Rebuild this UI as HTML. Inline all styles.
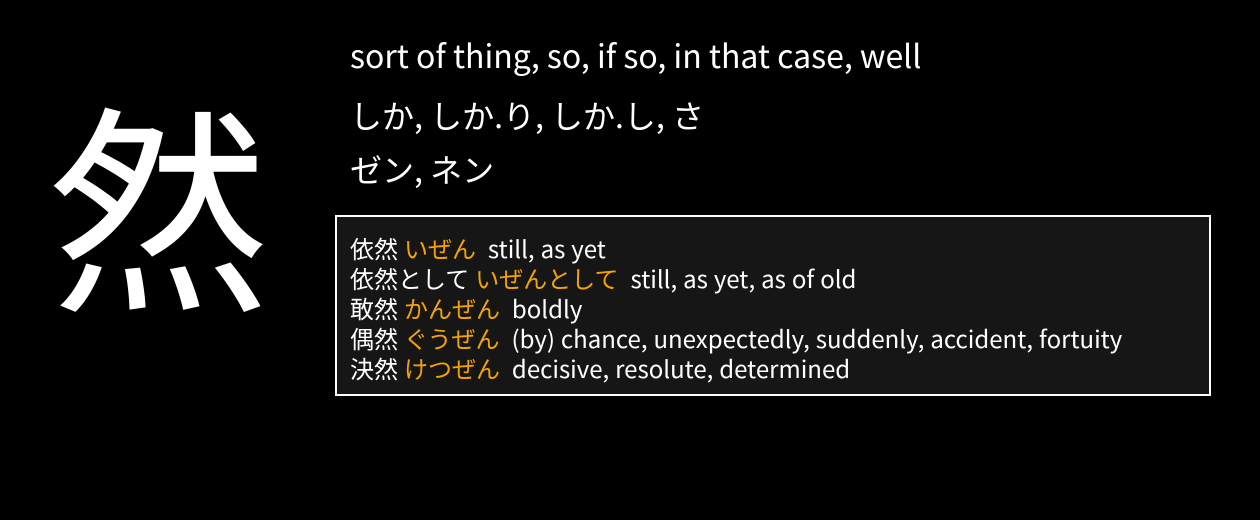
<!DOCTYPE html>
<html><head><meta charset="utf-8"><style>
html,body{margin:0;padding:0;background:#000;width:1260px;height:520px;overflow:hidden}
body{font-family:"Noto Sans CJK JP","Liberation Sans",sans-serif;color:#fff;position:relative}
.k{position:absolute;left:49px;top:54px;font-size:220px;line-height:290px}
.t{position:absolute;left:350px;white-space:nowrap}
.box{position:absolute;left:335px;top:215px;width:872px;height:177px;border:2px solid #fff;background:#161616}
.box div{position:absolute;left:13px;font-size:24px;line-height:30px;white-space:pre;word-spacing:0.6px}
.o{color:#f5a300}
</style></head><body>
<div class="k">然</div>
<div class="t" style="top:34px;font-size:32px;line-height:42px">sort of thing, so, if so, in that case, well</div>
<div class="t" style="top:94px;font-size:32px;line-height:42px">しか, しか.り, しか.し, さ</div>
<div class="t" style="top:148px;font-size:32px;line-height:42px">ゼン, ネン</div>
<div class="box">
<div style="top:16px">依然 <span class="o">いぜん</span>  still, as yet</div>
<div style="top:46px">依然として <span class="o">いぜんとして</span>  still, as yet, as of old</div>
<div style="top:76px">敢然 <span class="o">かんぜん</span>  boldly</div>
<div style="top:106px">偶然 <span class="o">ぐうぜん</span>  (by) chance, unexpectedly, suddenly, accident, fortuity</div>
<div style="top:136px">決然 <span class="o">けつぜん</span>  decisive, resolute, determined</div>
</div>
</body></html>
